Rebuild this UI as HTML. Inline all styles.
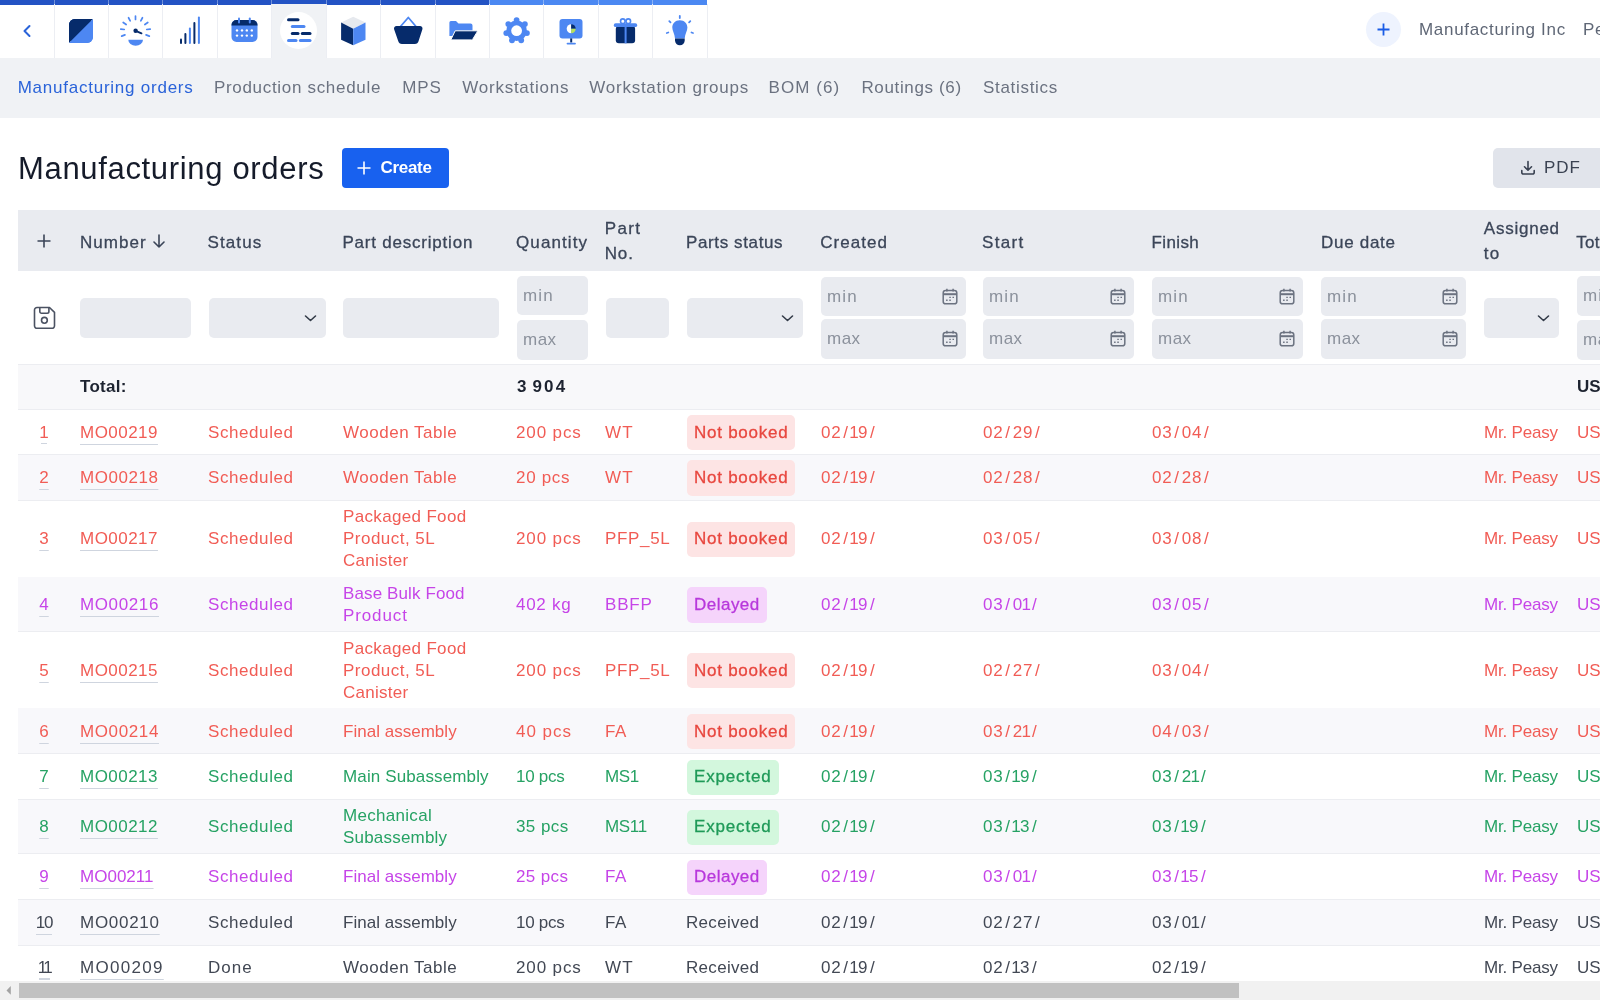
<!DOCTYPE html>
<html><head><meta charset="utf-8"><style>
*{box-sizing:border-box;margin:0;padding:0}
html,body{width:1600px;height:1000px;overflow:hidden;background:#fff;font-family:"Liberation Sans",sans-serif;color:#3a404c}
#top{position:absolute;left:0;top:0;width:1600px;height:58px;background:#fff}
.sep{position:absolute;top:4px;width:1px;height:54px;background:#eceef3}
.ic{position:absolute;top:4px;width:54px;height:54px}
#nav{position:absolute;left:0;top:58px;width:1600px;height:59.5px;background:#f0f2f5}
.nv{position:absolute;top:78px;font-size:17px;line-height:20px;color:#6b7280;white-space:nowrap}
#title{position:absolute;left:18px;top:151px;font-size:31px;line-height:36px;color:#151b2a;white-space:nowrap}
.btn{position:absolute;display:flex;align-items:center;font-size:17px;white-space:nowrap}
#create{left:342px;top:148px;width:107px;height:39.7px;background:#1861ef;border-radius:4px;color:#fff;font-weight:bold}
#pdf{left:1493px;top:148px;width:130px;height:40px;background:#e1e4eb;border-radius:5px;color:#3a4252}
#thead{position:absolute;left:18px;top:210px;width:1600px;height:61px;background:#e9ebf0}
.th{position:absolute;font-size:17px;line-height:24px;color:#3b4558;white-space:nowrap;-webkit-text-stroke:0.3px currentColor}
.inp{position:absolute;background:#e9ebf0;border-radius:5px}
.ph{position:absolute;left:6px;top:0;height:100%;display:flex;align-items:center;font-size:17px;color:#8b919c}
.row{position:absolute;left:18px;width:1600px}
.bl{position:absolute;left:18px;width:1600px;height:1px;background:#ecedf1}
.c{position:absolute;top:0;height:100%;display:flex;align-items:center;font-size:17px;line-height:22px;white-space:nowrap;padding-top:1.5px}
.u{text-decoration:underline;text-decoration-color:#cfd5df;text-decoration-thickness:1.3px;text-underline-offset:5.5px;text-decoration-skip-ink:none}
.badge{padding:0 7px;height:35.5px;border-radius:5px;display:flex;align-items:center;-webkit-text-stroke:0.3px currentColor}
.r{color:#f15c55}.r .badge{background:#fde4e4;color:#e8473f}
.p{color:#c645e8}.p .badge{background:#f5d4fb;color:#b838dc}
.g{color:#26a264}.g .badge{background:#d3f7dd;color:#1f9a58}
.k{color:#424854}
.alt{background:#f8f8fb}
#sb{position:absolute;left:0;top:981px;width:1600px;height:19px;background:#f1f1f1}
#thumb{position:absolute;left:19px;top:983px;width:1220px;height:14.5px;background:#c1c1c1}
</style></head><body><div id="wrap" style="position:absolute;left:0;top:0;width:1600px;height:1000px;overflow:hidden;will-change:transform">
<div id="top"></div>
<div style="position:absolute;left:0;top:0;width:489px;height:4.5px;background:#2353c4"></div>
<div style="position:absolute;left:489px;top:0;width:218px;height:4.5px;background:#4b88f2"></div>
<div style="position:absolute;left:271px;top:4px;width:55px;height:54px;background:#f0f2f5"></div>
<div style="position:absolute;left:280px;top:12px;width:37px;height:37px;border-radius:50%;background:#fff"></div>
<div class="sep" style="left:54px"></div>
<div style="position:absolute;left:54px;top:0;width:1px;height:4px;background:rgba(255,255,255,0.35)"></div>
<div class="sep" style="left:108px"></div>
<div style="position:absolute;left:108px;top:0;width:1px;height:4px;background:rgba(255,255,255,0.35)"></div>
<div class="sep" style="left:162px"></div>
<div style="position:absolute;left:162px;top:0;width:1px;height:4px;background:rgba(255,255,255,0.35)"></div>
<div class="sep" style="left:217px"></div>
<div style="position:absolute;left:217px;top:0;width:1px;height:4px;background:rgba(255,255,255,0.35)"></div>
<div class="sep" style="left:271px"></div>
<div style="position:absolute;left:271px;top:0;width:1px;height:4px;background:rgba(255,255,255,0.35)"></div>
<div class="sep" style="left:326px"></div>
<div style="position:absolute;left:326px;top:0;width:1px;height:4px;background:rgba(255,255,255,0.35)"></div>
<div class="sep" style="left:380px"></div>
<div style="position:absolute;left:380px;top:0;width:1px;height:4px;background:rgba(255,255,255,0.35)"></div>
<div class="sep" style="left:435px"></div>
<div style="position:absolute;left:435px;top:0;width:1px;height:4px;background:rgba(255,255,255,0.35)"></div>
<div class="sep" style="left:489px"></div>
<div style="position:absolute;left:489px;top:0;width:1px;height:4px;background:rgba(255,255,255,0.35)"></div>
<div class="sep" style="left:543px"></div>
<div style="position:absolute;left:543px;top:0;width:1px;height:4px;background:rgba(255,255,255,0.35)"></div>
<div class="sep" style="left:598px"></div>
<div style="position:absolute;left:598px;top:0;width:1px;height:4px;background:rgba(255,255,255,0.35)"></div>
<div class="sep" style="left:652px"></div>
<div style="position:absolute;left:652px;top:0;width:1px;height:4px;background:rgba(255,255,255,0.35)"></div>
<div class="sep" style="left:707px"></div>
<div style="position:absolute;left:707px;top:0;width:1px;height:4px;background:rgba(255,255,255,0.35)"></div>
<svg style="position:absolute;left:17px;top:19px" width="20" height="24" viewBox="0 0 20 24"><path d="M12.5 7 L7.5 12 L12.5 17" fill="none" stroke="#2a63d9" stroke-width="2" stroke-linecap="round" stroke-linejoin="round"/></svg>
<svg style="position:absolute;left:54px;top:4px" width="54" height="54" viewBox="54 4 54 54"><defs><clipPath id="cl1"><rect x="69" y="19" width="24" height="24" rx="6" ry="6"/></clipPath></defs><g clip-path="url(#cl1)"><rect x="69" y="19" width="24" height="24" fill="#4d87f2"/><path d="M69 19 H93 L69 43 Z" fill="#062b6b"/></g><path d="M69 43 V25 a6 6 0 0 1 6 -6 H93 Z" fill="#062b6b"/><path d="M93 19 V37 a6 6 0 0 1 -6 6 H69 Z" fill="#4d87f2"/></svg>
<svg style="position:absolute;left:108px;top:4px" width="54" height="54" viewBox="108 4 54 54"><line x1="135.50" y1="19.50" x2="135.50" y2="16.00" stroke="#4d87f2" stroke-width="1.7" stroke-linecap="round"/><line x1="140.81" y1="20.82" x2="142.45" y2="17.73" stroke="#4d87f2" stroke-width="1.7" stroke-linecap="round"/><line x1="144.87" y1="24.48" x2="147.77" y2="22.52" stroke="#4d87f2" stroke-width="1.7" stroke-linecap="round"/><line x1="146.73" y1="29.52" x2="150.20" y2="29.12" stroke="#4d87f2" stroke-width="1.7" stroke-linecap="round"/><line x1="146.05" y1="34.85" x2="149.32" y2="36.10" stroke="#4d87f2" stroke-width="1.7" stroke-linecap="round"/><line x1="130.19" y1="20.82" x2="128.55" y2="17.73" stroke="#4d87f2" stroke-width="1.7" stroke-linecap="round"/><line x1="126.13" y1="24.48" x2="123.23" y2="22.52" stroke="#4d87f2" stroke-width="1.7" stroke-linecap="round"/><line x1="124.27" y1="29.52" x2="120.80" y2="29.12" stroke="#4d87f2" stroke-width="1.7" stroke-linecap="round"/><line x1="124.95" y1="34.85" x2="121.68" y2="36.10" stroke="#4d87f2" stroke-width="1.7" stroke-linecap="round"/><circle cx="135.6" cy="30.8" r="2.2" fill="#062b6b"/><line x1="135.6" y1="30.8" x2="141.5" y2="33.3" stroke="#062b6b" stroke-width="1.8" stroke-linecap="round"/><path d="M128.3 39.8 H143 A7.35 6 0 0 1 128.3 39.8 Z" fill="#4d87f2"/></svg>
<svg style="position:absolute;left:162px;top:4px" width="54" height="54" viewBox="162 4 54 54"><line x1="181" y1="39.4" x2="181" y2="43" stroke="#062b6b" stroke-width="2" stroke-linecap="round"/><line x1="185.4" y1="33.9" x2="185.4" y2="43" stroke="#062b6b" stroke-width="2" stroke-linecap="round"/><line x1="189.9" y1="28.4" x2="189.9" y2="43" stroke="#4d87f2" stroke-width="2" stroke-linecap="round"/><line x1="194.4" y1="22.9" x2="194.4" y2="43" stroke="#062b6b" stroke-width="2" stroke-linecap="round"/><line x1="198.9" y1="17.4" x2="198.9" y2="43" stroke="#4d87f2" stroke-width="2" stroke-linecap="round"/></svg>
<svg style="position:absolute;left:217px;top:4px" width="54" height="54" viewBox="217 4 54 54"><rect x="231.5" y="20" width="26" height="22" rx="5" fill="#4d87f2"/><path d="M231.5 25.5 V25 a5 5 0 0 1 5 -5 H252.5 a5 5 0 0 1 5 5 V25.5 Z" fill="#062b6b"/><circle cx="237" cy="30.4" r="1.2" fill="#fff"/><circle cx="237" cy="35.6" r="1.2" fill="#fff"/><circle cx="242" cy="30.4" r="1.2" fill="#fff"/><circle cx="242" cy="35.6" r="1.2" fill="#fff"/><circle cx="246.8" cy="30.4" r="1.2" fill="#fff"/><circle cx="246.8" cy="35.6" r="1.2" fill="#fff"/><circle cx="251.8" cy="30.4" r="1.2" fill="#fff"/><circle cx="251.8" cy="35.6" r="1.2" fill="#fff"/><line x1="239" y1="18.5" x2="239" y2="22.5" stroke="#4d87f2" stroke-width="2" stroke-linecap="round"/><line x1="249.8" y1="18.5" x2="249.8" y2="22.5" stroke="#4d87f2" stroke-width="2" stroke-linecap="round"/></svg>
<svg style="position:absolute;left:271px;top:4px" width="54" height="54" viewBox="271 4 54 54"><line x1="288.5" y1="19.8" x2="298" y2="19.8" stroke="#062b6b" stroke-width="3" stroke-linecap="round"/><line x1="292.3" y1="26.6" x2="304" y2="26.6" stroke="#4d87f2" stroke-width="3" stroke-linecap="round"/><line x1="292.3" y1="33.6" x2="298" y2="33.6" stroke="#062b6b" stroke-width="3" stroke-linecap="round"/><line x1="302.3" y1="33.6" x2="310" y2="33.6" stroke="#062b6b" stroke-width="3" stroke-linecap="round"/><line x1="288.5" y1="40.4" x2="296" y2="40.4" stroke="#4d87f2" stroke-width="3" stroke-linecap="round"/><line x1="300.4" y1="40.4" x2="310" y2="40.4" stroke="#4d87f2" stroke-width="3" stroke-linecap="round"/></svg>
<svg style="position:absolute;left:326px;top:4px" width="54" height="54" viewBox="326 4 54 54"><path d="M353.2 16.7 L365.5 22.6 L353.2 28.8 L341.1 22.6Z" fill="#e6e9ee"/><path d="M341.1 22.6 L353.2 28.8 V45.3 L341.1 39.8Z" fill="#062b6b"/><path d="M365.5 22.6 L353.2 28.8 V45.3 L365.5 39.8Z" fill="#4d87f2"/></svg>
<svg style="position:absolute;left:380px;top:4px" width="54" height="54" viewBox="380 4 54 54"><path d="M400.5 26.5 L408.3 17.5 L416 26.5" fill="none" stroke="#4d87f2" stroke-width="1.8" stroke-linejoin="round"/><path d="M396.5 26 H420 a2.5 2.5 0 0 1 2.4 3.2 L418.6 41 a4 4 0 0 1 -3.8 3 H402 a4 4 0 0 1 -3.8 -3 L394.1 29.2 a2.5 2.5 0 0 1 2.4 -3.2Z" fill="#062b6b"/></svg>
<svg style="position:absolute;left:435px;top:4px" width="54" height="54" viewBox="435 4 54 54"><path d="M449.4 22.5 a1.5 1.5 0 0 1 1.5 -1.5 H456 L458.5 23.5 H470.5 a2 2 0 0 1 2 2 V36 H449.4Z" fill="#4d87f2"/><path d="M455.2 30.8 H476.5 a0.8 0.8 0 0 1 0.7 1.1 L472.6 39.4 a1 1 0 0 1 -0.9 0.5 H450.8 Z" fill="#062b6b" stroke="#fff" stroke-width="1"/></svg>
<svg style="position:absolute;left:489px;top:4px" width="54" height="54" viewBox="489 4 54 54"><circle cx="516.6" cy="30.7" r="10.3" fill="#4d87f2"/><circle cx="516.60" cy="20.10" r="2.9" fill="#4d87f2"/><circle cx="524.89" cy="24.09" r="2.9" fill="#4d87f2"/><circle cx="526.93" cy="33.06" r="2.9" fill="#4d87f2"/><circle cx="521.20" cy="40.25" r="2.9" fill="#4d87f2"/><circle cx="512.00" cy="40.25" r="2.9" fill="#4d87f2"/><circle cx="506.27" cy="33.06" r="2.9" fill="#4d87f2"/><circle cx="508.31" cy="24.09" r="2.9" fill="#4d87f2"/><circle cx="516.6" cy="30.7" r="5.4" fill="#fff"/></svg>
<svg style="position:absolute;left:543px;top:4px" width="54" height="54" viewBox="543 4 54 54"><rect x="559.5" y="19.1" width="23" height="19.3" rx="3" fill="#4d87f2"/><path d="M571.2 24.3 A4.5 4.5 0 0 0 571.2 33.3Z" fill="#fff"/><path d="M571.2 24.3 A4.5 4.5 0 0 1 575.7 28.8 H571.2Z" fill="#062b6b"/><path d="M575.7 28.8 A4.5 4.5 0 0 1 571.2 33.3 V28.8Z" fill="#b9e05a"/><line x1="571.2" y1="38.4" x2="571.2" y2="42.5" stroke="#062b6b" stroke-width="2"/><line x1="567.5" y1="43.6" x2="575" y2="43.6" stroke="#4d87f2" stroke-width="1.8" stroke-linecap="round"/></svg>
<svg style="position:absolute;left:598px;top:4px" width="54" height="54" viewBox="598 4 54 54"><rect x="615.8" y="26" width="19.3" height="17.3" rx="3" fill="#062b6b"/><rect x="624.6" y="26" width="2" height="17.3" fill="#4d87f2"/><rect x="613.8" y="23.2" width="23.4" height="3.9" rx="1.9" fill="#4d87f2"/><circle cx="622.8" cy="21.2" r="2.3" fill="none" stroke="#4d87f2" stroke-width="1.6"/><circle cx="628.3" cy="21.2" r="2.3" fill="none" stroke="#4d87f2" stroke-width="1.6"/></svg>
<svg style="position:absolute;left:652px;top:4px" width="54" height="54" viewBox="652 4 54 54"><path d="M679.8 20.3 C684.5 20.3 687.4 23.8 687.4 27.6 C687.4 31 685 34 684.7 38.5 H675 C674.7 34 672.3 31 672.3 27.6 C672.3 23.8 675.2 20.3 679.8 20.3Z" fill="#4d87f2"/><path d="M675 38.5 H684.7 V40.5 a4.85 4.85 0 0 1 -9.7 0Z" fill="#062b6b"/><line x1="679.8" y1="16" x2="679.8" y2="18" stroke="#4d87f2" stroke-width="1.8" stroke-linecap="round"/><line x1="669.3" y1="21.2" x2="670.5" y2="22.3" stroke="#4d87f2" stroke-width="1.8" stroke-linecap="round"/><line x1="690.3" y1="21.2" x2="689.1" y2="22.3" stroke="#4d87f2" stroke-width="1.8" stroke-linecap="round"/><line x1="666.8" y1="33" x2="668.3" y2="32.5" stroke="#4d87f2" stroke-width="1.8" stroke-linecap="round"/><line x1="693" y1="33" x2="691.5" y2="32.5" stroke="#4d87f2" stroke-width="1.8" stroke-linecap="round"/></svg>
<div style="position:absolute;left:1366px;top:12px;width:35px;height:35px;border-radius:50%;background:#eef3fe"></div>
<svg style="position:absolute;left:1376px;top:22px" width="15" height="15" viewBox="0 0 15 15"><path d="M7.5 1.5 V13.5 M1.5 7.5 H13.5" stroke="#1a5ce6" stroke-width="1.8"/></svg>
<div class="nv" style="left:1419px;top:20px;color:#5f6776;letter-spacing:0.69px;">Manufacturing Inc</div>
<div class="nv" style="left:1583px;top:20px;color:#5f6776;letter-spacing:0.6px">Peasy</div>
<div id="nav"></div>
<div class="nv" style="left:17.7px;letter-spacing:0.76px;color:#2a63d9">Manufacturing orders</div>
<div class="nv" style="left:213.9px;letter-spacing:0.69px;">Production schedule</div>
<div class="nv" style="left:402.3px;letter-spacing:0.80px;">MPS</div>
<div class="nv" style="left:462.3px;letter-spacing:0.75px;">Workstations</div>
<div class="nv" style="left:589.3px;letter-spacing:0.75px;">Workstation groups</div>
<div class="nv" style="left:768.6px;letter-spacing:1.07px;">BOM (6)</div>
<div class="nv" style="left:861.4px;letter-spacing:0.65px;">Routings (6)</div>
<div class="nv" style="left:983.0px;letter-spacing:0.69px;">Statistics</div>
<div id="title" style="letter-spacing:0.67px;">Manufacturing orders</div>
<div class="btn" id="create"><svg style="position:absolute;left:15px;top:13px" width="14" height="14" viewBox="0 0 14 14"><path d="M7 0.5 V13.5 M0.5 7 H13.5" stroke="#fff" stroke-width="1.6"/></svg><span style="position:absolute;left:38.5px;top:10px;line-height:20px;letter-spacing:-0.30px;">Create</span></div>
<div class="btn" id="pdf"><svg style="position:absolute;left:27px;top:12px" width="16" height="16" viewBox="0 0 16 16"><path d="M8 1.5 V10 M4.5 6.8 L8 10.2 L11.5 6.8 M1.8 10.5 V12.5 a1.5 1.5 0 0 0 1.5 1.5 H12.7 a1.5 1.5 0 0 0 1.5 -1.5 V10.5" fill="none" stroke="#3a4252" stroke-width="1.6" stroke-linecap="round" stroke-linejoin="round"/></svg><span style="position:absolute;left:51px;top:10px;line-height:20px;letter-spacing:0.95px;">PDF</span></div>
<div id="thead"></div>
<svg style="position:absolute;left:37px;top:234px" width="14" height="14" viewBox="0 0 14 14"><path d="M7 0.5 V13.5 M0.5 7 H13.5" stroke="#3b4558" stroke-width="1.6"/></svg>
<div class="th" style="left:79.9px;top:230.5px;letter-spacing:1.04px;">Number</div>
<div class="th" style="left:207.5px;top:230.5px;letter-spacing:1.10px;">Status</div>
<div class="th" style="left:342.4px;top:230.5px;letter-spacing:0.79px;">Part description</div>
<div class="th" style="left:516.0px;top:230.5px;letter-spacing:1.11px;">Quantity</div>
<div class="th" style="left:604.8px;top:217px;letter-spacing:1.30px;">Part</div>
<div class="th" style="left:604.8px;top:241.5px;letter-spacing:0.80px;">No.</div>
<div class="th" style="left:686.0px;top:230.5px;letter-spacing:0.62px;">Parts status</div>
<div class="th" style="left:820.2px;top:230.5px;letter-spacing:1.03px;">Created</div>
<div class="th" style="left:982.0px;top:230.5px;letter-spacing:1.30px;">Start</div>
<div class="th" style="left:1151.5px;top:230.5px;letter-spacing:0.39px;">Finish</div>
<div class="th" style="left:1321.1px;top:230.5px;letter-spacing:0.69px;">Due date</div>
<div class="th" style="left:1483.8px;top:217px;letter-spacing:0.76px;">Assigned</div>
<div class="th" style="left:1483.8px;top:241.5px;letter-spacing:1.30px;">to</div>
<div class="th" style="left:1576.3px;top:230.5px;letter-spacing:0.30px;">Total</div>
<svg style="position:absolute;left:153px;top:234px" width="12" height="14" viewBox="0 0 12 14"><path d="M6 1 V13 M1 8 L6 13 L11 8" fill="none" stroke="#3b4558" stroke-width="1.6" stroke-linecap="round" stroke-linejoin="round"/></svg>
<svg style="position:absolute;left:33px;top:306px" width="23" height="24" viewBox="0 0 23 24"><path d="M4 1.5 H16.5 L21.5 6.3 V19.8 a2.5 2.5 0 0 1 -2.5 2.5 H4 a2.5 2.5 0 0 1 -2.5 -2.5 V4 a2.5 2.5 0 0 1 2.5 -2.5Z" fill="none" stroke="#4b5262" stroke-width="1.6" stroke-linejoin="round"/><path d="M6.8 1.8 V5.5 a1.7 1.7 0 0 0 1.7 1.7 H14.2 a1.7 1.7 0 0 0 1.7 -1.7 V1.8" fill="none" stroke="#4b5262" stroke-width="1.6"/><circle cx="11.4" cy="14.3" r="2.9" fill="none" stroke="#4b5262" stroke-width="1.6"/></svg>
<div class="inp" style="left:80px;top:298px;width:111px;height:40px"></div>
<div class="inp" style="left:209px;top:298px;width:117px;height:40px"><svg style="position:absolute;right:9px;top:15.0px" width="13" height="10" viewBox="0 0 13 10"><path d="M1.5 3 L6.5 7.5 L11.5 3" fill="none" stroke="#333b48" stroke-width="1.6" stroke-linecap="round" stroke-linejoin="round"/></svg></div>
<div class="inp" style="left:343px;top:298px;width:156px;height:40px"></div>
<div class="inp" style="left:517px;top:276px;width:71px;height:39px"><div class="ph" style="letter-spacing:1.15px;">min</div></div>
<div class="inp" style="left:517px;top:320px;width:71px;height:39.5px"><div class="ph" style="letter-spacing:0.50px;">max</div></div>
<div class="inp" style="left:605.5px;top:298px;width:63.5px;height:39.5px"></div>
<div class="inp" style="left:687px;top:298px;width:116px;height:39.5px"><svg style="position:absolute;right:9px;top:14.8px" width="13" height="10" viewBox="0 0 13 10"><path d="M1.5 3 L6.5 7.5 L11.5 3" fill="none" stroke="#333b48" stroke-width="1.6" stroke-linecap="round" stroke-linejoin="round"/></svg></div>
<div class="inp" style="left:821px;top:277px;width:144.5px;height:39px"><div class="ph" style="letter-spacing:1.15px;">min</div><svg style="position:absolute;right:8px;top:10.5px" width="16" height="17" viewBox="0 0 16 17"><rect x="1.2" y="2.6" width="13.6" height="13.2" rx="2.4" fill="none" stroke="#6b7280" stroke-width="1.5"/><path d="M1.2 6.2 H14.8" stroke="#6b7280" stroke-width="2"/><path d="M4.9 0.8 V3.6 M11.1 0.8 V3.6" stroke="#6b7280" stroke-width="1.5"/><path d="M7.3 9.4h1.5M10.5 9.4h1.5M4.1 12.2h1.5M7.3 12.2h1.5" stroke="#6b7280" stroke-width="1.4"/></svg></div>
<div class="inp" style="left:821px;top:319px;width:144.5px;height:39.5px"><div class="ph" style="letter-spacing:0.50px;">max</div><svg style="position:absolute;right:8px;top:10.8px" width="16" height="17" viewBox="0 0 16 17"><rect x="1.2" y="2.6" width="13.6" height="13.2" rx="2.4" fill="none" stroke="#6b7280" stroke-width="1.5"/><path d="M1.2 6.2 H14.8" stroke="#6b7280" stroke-width="2"/><path d="M4.9 0.8 V3.6 M11.1 0.8 V3.6" stroke="#6b7280" stroke-width="1.5"/><path d="M7.3 9.4h1.5M10.5 9.4h1.5M4.1 12.2h1.5M7.3 12.2h1.5" stroke="#6b7280" stroke-width="1.4"/></svg></div>
<div class="inp" style="left:983px;top:277px;width:151px;height:39px"><div class="ph" style="letter-spacing:1.15px;">min</div><svg style="position:absolute;right:8px;top:10.5px" width="16" height="17" viewBox="0 0 16 17"><rect x="1.2" y="2.6" width="13.6" height="13.2" rx="2.4" fill="none" stroke="#6b7280" stroke-width="1.5"/><path d="M1.2 6.2 H14.8" stroke="#6b7280" stroke-width="2"/><path d="M4.9 0.8 V3.6 M11.1 0.8 V3.6" stroke="#6b7280" stroke-width="1.5"/><path d="M7.3 9.4h1.5M10.5 9.4h1.5M4.1 12.2h1.5M7.3 12.2h1.5" stroke="#6b7280" stroke-width="1.4"/></svg></div>
<div class="inp" style="left:983px;top:319px;width:151px;height:39.5px"><div class="ph" style="letter-spacing:0.50px;">max</div><svg style="position:absolute;right:8px;top:10.8px" width="16" height="17" viewBox="0 0 16 17"><rect x="1.2" y="2.6" width="13.6" height="13.2" rx="2.4" fill="none" stroke="#6b7280" stroke-width="1.5"/><path d="M1.2 6.2 H14.8" stroke="#6b7280" stroke-width="2"/><path d="M4.9 0.8 V3.6 M11.1 0.8 V3.6" stroke="#6b7280" stroke-width="1.5"/><path d="M7.3 9.4h1.5M10.5 9.4h1.5M4.1 12.2h1.5M7.3 12.2h1.5" stroke="#6b7280" stroke-width="1.4"/></svg></div>
<div class="inp" style="left:1152px;top:277px;width:151px;height:39px"><div class="ph" style="letter-spacing:1.15px;">min</div><svg style="position:absolute;right:8px;top:10.5px" width="16" height="17" viewBox="0 0 16 17"><rect x="1.2" y="2.6" width="13.6" height="13.2" rx="2.4" fill="none" stroke="#6b7280" stroke-width="1.5"/><path d="M1.2 6.2 H14.8" stroke="#6b7280" stroke-width="2"/><path d="M4.9 0.8 V3.6 M11.1 0.8 V3.6" stroke="#6b7280" stroke-width="1.5"/><path d="M7.3 9.4h1.5M10.5 9.4h1.5M4.1 12.2h1.5M7.3 12.2h1.5" stroke="#6b7280" stroke-width="1.4"/></svg></div>
<div class="inp" style="left:1152px;top:319px;width:151px;height:39.5px"><div class="ph" style="letter-spacing:0.50px;">max</div><svg style="position:absolute;right:8px;top:10.8px" width="16" height="17" viewBox="0 0 16 17"><rect x="1.2" y="2.6" width="13.6" height="13.2" rx="2.4" fill="none" stroke="#6b7280" stroke-width="1.5"/><path d="M1.2 6.2 H14.8" stroke="#6b7280" stroke-width="2"/><path d="M4.9 0.8 V3.6 M11.1 0.8 V3.6" stroke="#6b7280" stroke-width="1.5"/><path d="M7.3 9.4h1.5M10.5 9.4h1.5M4.1 12.2h1.5M7.3 12.2h1.5" stroke="#6b7280" stroke-width="1.4"/></svg></div>
<div class="inp" style="left:1321px;top:277px;width:144.5px;height:39px"><div class="ph" style="letter-spacing:1.15px;">min</div><svg style="position:absolute;right:8px;top:10.5px" width="16" height="17" viewBox="0 0 16 17"><rect x="1.2" y="2.6" width="13.6" height="13.2" rx="2.4" fill="none" stroke="#6b7280" stroke-width="1.5"/><path d="M1.2 6.2 H14.8" stroke="#6b7280" stroke-width="2"/><path d="M4.9 0.8 V3.6 M11.1 0.8 V3.6" stroke="#6b7280" stroke-width="1.5"/><path d="M7.3 9.4h1.5M10.5 9.4h1.5M4.1 12.2h1.5M7.3 12.2h1.5" stroke="#6b7280" stroke-width="1.4"/></svg></div>
<div class="inp" style="left:1321px;top:319px;width:144.5px;height:39.5px"><div class="ph" style="letter-spacing:0.50px;">max</div><svg style="position:absolute;right:8px;top:10.8px" width="16" height="17" viewBox="0 0 16 17"><rect x="1.2" y="2.6" width="13.6" height="13.2" rx="2.4" fill="none" stroke="#6b7280" stroke-width="1.5"/><path d="M1.2 6.2 H14.8" stroke="#6b7280" stroke-width="2"/><path d="M4.9 0.8 V3.6 M11.1 0.8 V3.6" stroke="#6b7280" stroke-width="1.5"/><path d="M7.3 9.4h1.5M10.5 9.4h1.5M4.1 12.2h1.5M7.3 12.2h1.5" stroke="#6b7280" stroke-width="1.4"/></svg></div>
<div class="inp" style="left:1484px;top:298px;width:75px;height:39.5px"><svg style="position:absolute;right:9px;top:14.8px" width="13" height="10" viewBox="0 0 13 10"><path d="M1.5 3 L6.5 7.5 L11.5 3" fill="none" stroke="#333b48" stroke-width="1.6" stroke-linecap="round" stroke-linejoin="round"/></svg></div>
<div class="inp" style="left:1577px;top:276px;width:40px;height:40px"><div class="ph" style="letter-spacing:1.15px;">min</div></div>
<div class="inp" style="left:1577px;top:320px;width:40px;height:40px"><div class="ph" style="letter-spacing:0.50px;">max</div></div>
<div class="bl" style="top:364px"></div>
<div class="row" style="top:365px;height:44px;background:#f8f8fa"></div>
<div class="c" style="left:80px;top:365px;height:44px;padding-top:0;font-weight:bold;color:#1d2330;letter-spacing:0.30px;">Total:</div>
<div class="c" style="left:517px;top:365px;height:44px;padding-top:0;font-weight:bold;color:#1d2330"><span>3</span><span style="margin-left:6px;letter-spacing:2.2px">904</span></div>
<div class="c" style="left:1577px;top:365px;height:44px;padding-top:0;font-weight:bold;color:#1d2330">USD</div>
<div class="bl" style="top:409px"></div>
<div class="row" style="top:409px;height:45.5px"></div>
<div class="bl" style="top:454.0px"></div>
<div class="c r" style="left:35px;top:409px;height:45.5px;width:18px;justify-content:center"><span style="position:relative;display:inline-block;line-height:22px;">1<span style="position:absolute;left:50%;margin-left:-2.6px;width:5.2px;top:21.6px;height:1.3px;background:#cfd5df"></span></span></div>
<div class="c r" style="left:80px;top:409px;height:45.5px;"><span class="u"><span style="letter-spacing:0.47px;">MO00219</span></span></div>
<div class="c r" style="left:208px;top:409px;height:45.5px;"><span style="letter-spacing:0.58px;">Scheduled</span></div>
<div class="c r" style="left:343px;top:409px;height:45.5px;"><div><span style="letter-spacing:0.52px;">Wooden Table</span></div></div>
<div class="c r" style="left:516px;top:409px;height:45.5px;"><span style="letter-spacing:0.87px;">200 pcs</span></div>
<div class="c r" style="left:605px;top:409px;height:45.5px;"><span style="letter-spacing:1.30px;">WT</span></div>
<div class="c r" style="left:687px;top:409px;height:45.5px;"><span class="badge"><span style="letter-spacing:0.74px;">Not booked</span></span></div>
<div class="c r" style="left:821px;top:409px;height:45.5px;"><span style="letter-spacing:0.7px">02<span style="margin:0 2px">/</span><span style="margin:0 -1.5px">1</span>9<span style="margin:0 2px">/</span></span></div>
<div class="c r" style="left:983px;top:409px;height:45.5px;"><span style="letter-spacing:0.7px">02<span style="margin:0 2px">/</span>29<span style="margin:0 2px">/</span></span></div>
<div class="c r" style="left:1152px;top:409px;height:45.5px;"><span style="letter-spacing:0.7px">03<span style="margin:0 2px">/</span>04<span style="margin:0 2px">/</span></span></div>
<div class="c r" style="left:1484px;top:409px;height:45.5px;"><span style="letter-spacing:-0.19px;">Mr. Peasy</span></div>
<div class="c r" style="left:1577px;top:409px;height:45.5px;">USD</div>
<div class="row alt" style="top:454.5px;height:45.8px"></div>
<div class="bl" style="top:499.8px"></div>
<div class="c r" style="left:35px;top:454.5px;height:45.8px;width:18px;justify-content:center"><span class="u">2</span></div>
<div class="c r" style="left:80px;top:454.5px;height:45.8px;"><span class="u"><span style="letter-spacing:0.53px;">MO00218</span></span></div>
<div class="c r" style="left:208px;top:454.5px;height:45.8px;"><span style="letter-spacing:0.58px;">Scheduled</span></div>
<div class="c r" style="left:343px;top:454.5px;height:45.8px;"><div><span style="letter-spacing:0.52px;">Wooden Table</span></div></div>
<div class="c r" style="left:516px;top:454.5px;height:45.8px;"><span style="letter-spacing:0.68px;">20 pcs</span></div>
<div class="c r" style="left:605px;top:454.5px;height:45.8px;"><span style="letter-spacing:1.30px;">WT</span></div>
<div class="c r" style="left:687px;top:454.5px;height:45.8px;"><span class="badge"><span style="letter-spacing:0.74px;">Not booked</span></span></div>
<div class="c r" style="left:821px;top:454.5px;height:45.8px;"><span style="letter-spacing:0.7px">02<span style="margin:0 2px">/</span><span style="margin:0 -1.5px">1</span>9<span style="margin:0 2px">/</span></span></div>
<div class="c r" style="left:983px;top:454.5px;height:45.8px;"><span style="letter-spacing:0.7px">02<span style="margin:0 2px">/</span>28<span style="margin:0 2px">/</span></span></div>
<div class="c r" style="left:1152px;top:454.5px;height:45.8px;"><span style="letter-spacing:0.7px">02<span style="margin:0 2px">/</span>28<span style="margin:0 2px">/</span></span></div>
<div class="c r" style="left:1484px;top:454.5px;height:45.8px;"><span style="letter-spacing:-0.19px;">Mr. Peasy</span></div>
<div class="c r" style="left:1577px;top:454.5px;height:45.8px;">USD</div>
<div class="row" style="top:500.3px;height:76.7px"></div>
<div class="bl" style="top:576.5px"></div>
<div class="c r" style="left:35px;top:500.3px;height:76.7px;width:18px;justify-content:center"><span class="u">3</span></div>
<div class="c r" style="left:80px;top:500.3px;height:76.7px;"><span class="u"><span style="letter-spacing:0.47px;">MO00217</span></span></div>
<div class="c r" style="left:208px;top:500.3px;height:76.7px;"><span style="letter-spacing:0.58px;">Scheduled</span></div>
<div class="c r" style="left:343px;top:500.3px;height:76.7px;"><div><span style="letter-spacing:0.34px;">Packaged Food</span><br><span style="letter-spacing:0.48px;">Product, 5L</span><br><span style="letter-spacing:0.27px;">Canister</span></div></div>
<div class="c r" style="left:516px;top:500.3px;height:76.7px;"><span style="letter-spacing:0.87px;">200 pcs</span></div>
<div class="c r" style="left:605px;top:500.3px;height:76.7px;"><span style="letter-spacing:0.66px;">PFP_5L</span></div>
<div class="c r" style="left:687px;top:500.3px;height:76.7px;"><span class="badge"><span style="letter-spacing:0.74px;">Not booked</span></span></div>
<div class="c r" style="left:821px;top:500.3px;height:76.7px;"><span style="letter-spacing:0.7px">02<span style="margin:0 2px">/</span><span style="margin:0 -1.5px">1</span>9<span style="margin:0 2px">/</span></span></div>
<div class="c r" style="left:983px;top:500.3px;height:76.7px;"><span style="letter-spacing:0.7px">03<span style="margin:0 2px">/</span>05<span style="margin:0 2px">/</span></span></div>
<div class="c r" style="left:1152px;top:500.3px;height:76.7px;"><span style="letter-spacing:0.7px">03<span style="margin:0 2px">/</span>08<span style="margin:0 2px">/</span></span></div>
<div class="c r" style="left:1484px;top:500.3px;height:76.7px;"><span style="letter-spacing:-0.19px;">Mr. Peasy</span></div>
<div class="c r" style="left:1577px;top:500.3px;height:76.7px;">USD</div>
<div class="row alt" style="top:577px;height:54.6px"></div>
<div class="bl" style="top:631.1px"></div>
<div class="c p" style="left:35px;top:577px;height:54.6px;width:18px;justify-content:center"><span class="u">4</span></div>
<div class="c p" style="left:80px;top:577px;height:54.6px;"><span class="u"><span style="letter-spacing:0.62px;">MO00216</span></span></div>
<div class="c p" style="left:208px;top:577px;height:54.6px;"><span style="letter-spacing:0.58px;">Scheduled</span></div>
<div class="c p" style="left:343px;top:577px;height:54.6px;"><div><span style="letter-spacing:0.12px;">Base Bulk Food</span><br><span style="letter-spacing:0.88px;">Product</span></div></div>
<div class="c p" style="left:516px;top:577px;height:54.6px;"><span style="letter-spacing:0.72px;">402 kg</span></div>
<div class="c p" style="left:605px;top:577px;height:54.6px;"><span style="letter-spacing:0.83px;">BBFP</span></div>
<div class="c p" style="left:687px;top:577px;height:54.6px;"><span class="badge"><span style="letter-spacing:0.48px;">Delayed</span></span></div>
<div class="c p" style="left:821px;top:577px;height:54.6px;"><span style="letter-spacing:0.7px">02<span style="margin:0 2px">/</span><span style="margin:0 -1.5px">1</span>9<span style="margin:0 2px">/</span></span></div>
<div class="c p" style="left:983px;top:577px;height:54.6px;"><span style="letter-spacing:0.7px">03<span style="margin:0 2px">/</span>0<span style="margin:0 -1.5px">1</span><span style="margin:0 2px">/</span></span></div>
<div class="c p" style="left:1152px;top:577px;height:54.6px;"><span style="letter-spacing:0.7px">03<span style="margin:0 2px">/</span>05<span style="margin:0 2px">/</span></span></div>
<div class="c p" style="left:1484px;top:577px;height:54.6px;"><span style="letter-spacing:-0.19px;">Mr. Peasy</span></div>
<div class="c p" style="left:1577px;top:577px;height:54.6px;">USD</div>
<div class="row" style="top:631.6px;height:76.6px"></div>
<div class="bl" style="top:707.7px"></div>
<div class="c r" style="left:35px;top:631.6px;height:76.6px;width:18px;justify-content:center"><span class="u">5</span></div>
<div class="c r" style="left:80px;top:631.6px;height:76.6px;"><span class="u"><span style="letter-spacing:0.47px;">MO00215</span></span></div>
<div class="c r" style="left:208px;top:631.6px;height:76.6px;"><span style="letter-spacing:0.58px;">Scheduled</span></div>
<div class="c r" style="left:343px;top:631.6px;height:76.6px;"><div><span style="letter-spacing:0.34px;">Packaged Food</span><br><span style="letter-spacing:0.48px;">Product, 5L</span><br><span style="letter-spacing:0.27px;">Canister</span></div></div>
<div class="c r" style="left:516px;top:631.6px;height:76.6px;"><span style="letter-spacing:0.87px;">200 pcs</span></div>
<div class="c r" style="left:605px;top:631.6px;height:76.6px;"><span style="letter-spacing:0.66px;">PFP_5L</span></div>
<div class="c r" style="left:687px;top:631.6px;height:76.6px;"><span class="badge"><span style="letter-spacing:0.74px;">Not booked</span></span></div>
<div class="c r" style="left:821px;top:631.6px;height:76.6px;"><span style="letter-spacing:0.7px">02<span style="margin:0 2px">/</span><span style="margin:0 -1.5px">1</span>9<span style="margin:0 2px">/</span></span></div>
<div class="c r" style="left:983px;top:631.6px;height:76.6px;"><span style="letter-spacing:0.7px">02<span style="margin:0 2px">/</span>27<span style="margin:0 2px">/</span></span></div>
<div class="c r" style="left:1152px;top:631.6px;height:76.6px;"><span style="letter-spacing:0.7px">03<span style="margin:0 2px">/</span>04<span style="margin:0 2px">/</span></span></div>
<div class="c r" style="left:1484px;top:631.6px;height:76.6px;"><span style="letter-spacing:-0.19px;">Mr. Peasy</span></div>
<div class="c r" style="left:1577px;top:631.6px;height:76.6px;">USD</div>
<div class="row alt" style="top:708.2px;height:45.6px"></div>
<div class="bl" style="top:753.3px"></div>
<div class="c r" style="left:35px;top:708.2px;height:45.6px;width:18px;justify-content:center"><span class="u">6</span></div>
<div class="c r" style="left:80px;top:708.2px;height:45.6px;"><span class="u"><span style="letter-spacing:0.62px;">MO00214</span></span></div>
<div class="c r" style="left:208px;top:708.2px;height:45.6px;"><span style="letter-spacing:0.58px;">Scheduled</span></div>
<div class="c r" style="left:343px;top:708.2px;height:45.6px;"><div><span style="letter-spacing:0.02px;">Final assembly</span></div></div>
<div class="c r" style="left:516px;top:708.2px;height:45.6px;"><span style="letter-spacing:0.99px;">40 pcs</span></div>
<div class="c r" style="left:605px;top:708.2px;height:45.6px;"><span style="letter-spacing:0.50px;">FA</span></div>
<div class="c r" style="left:687px;top:708.2px;height:45.6px;"><span class="badge"><span style="letter-spacing:0.74px;">Not booked</span></span></div>
<div class="c r" style="left:821px;top:708.2px;height:45.6px;"><span style="letter-spacing:0.7px">02<span style="margin:0 2px">/</span><span style="margin:0 -1.5px">1</span>9<span style="margin:0 2px">/</span></span></div>
<div class="c r" style="left:983px;top:708.2px;height:45.6px;"><span style="letter-spacing:0.7px">03<span style="margin:0 2px">/</span>2<span style="margin:0 -1.5px">1</span><span style="margin:0 2px">/</span></span></div>
<div class="c r" style="left:1152px;top:708.2px;height:45.6px;"><span style="letter-spacing:0.7px">04<span style="margin:0 2px">/</span>03<span style="margin:0 2px">/</span></span></div>
<div class="c r" style="left:1484px;top:708.2px;height:45.6px;"><span style="letter-spacing:-0.19px;">Mr. Peasy</span></div>
<div class="c r" style="left:1577px;top:708.2px;height:45.6px;">USD</div>
<div class="row" style="top:753.8px;height:45.7px"></div>
<div class="bl" style="top:799.0px"></div>
<div class="c g" style="left:35px;top:753.8px;height:45.7px;width:18px;justify-content:center"><span class="u">7</span></div>
<div class="c g" style="left:80px;top:753.8px;height:45.7px;"><span class="u"><span style="letter-spacing:0.47px;">MO00213</span></span></div>
<div class="c g" style="left:208px;top:753.8px;height:45.7px;"><span style="letter-spacing:0.58px;">Scheduled</span></div>
<div class="c g" style="left:343px;top:753.8px;height:45.7px;"><div><span style="letter-spacing:0.13px;">Main Subassembly</span></div></div>
<div class="c g" style="left:516px;top:753.8px;height:45.7px;"><span style="letter-spacing:-0.26px;">10 pcs</span></div>
<div class="c g" style="left:605px;top:753.8px;height:45.7px;"><span style="letter-spacing:-0.35px;">MS1</span></div>
<div class="c g" style="left:687px;top:753.8px;height:45.7px;"><span class="badge"><span style="letter-spacing:0.83px;">Expected</span></span></div>
<div class="c g" style="left:821px;top:753.8px;height:45.7px;"><span style="letter-spacing:0.7px">02<span style="margin:0 2px">/</span><span style="margin:0 -1.5px">1</span>9<span style="margin:0 2px">/</span></span></div>
<div class="c g" style="left:983px;top:753.8px;height:45.7px;"><span style="letter-spacing:0.7px">03<span style="margin:0 2px">/</span><span style="margin:0 -1.5px">1</span>9<span style="margin:0 2px">/</span></span></div>
<div class="c g" style="left:1152px;top:753.8px;height:45.7px;"><span style="letter-spacing:0.7px">03<span style="margin:0 2px">/</span>2<span style="margin:0 -1.5px">1</span><span style="margin:0 2px">/</span></span></div>
<div class="c g" style="left:1484px;top:753.8px;height:45.7px;"><span style="letter-spacing:-0.19px;">Mr. Peasy</span></div>
<div class="c g" style="left:1577px;top:753.8px;height:45.7px;">USD</div>
<div class="row alt" style="top:799.5px;height:54.3px"></div>
<div class="bl" style="top:853.3px"></div>
<div class="c g" style="left:35px;top:799.5px;height:54.3px;width:18px;justify-content:center"><span class="u">8</span></div>
<div class="c g" style="left:80px;top:799.5px;height:54.3px;"><span class="u"><span style="letter-spacing:0.47px;">MO00212</span></span></div>
<div class="c g" style="left:208px;top:799.5px;height:54.3px;"><span style="letter-spacing:0.58px;">Scheduled</span></div>
<div class="c g" style="left:343px;top:799.5px;height:54.3px;"><div><span style="letter-spacing:0.30px;">Mechanical</span><br><span style="letter-spacing:0.20px;">Subassembly</span></div></div>
<div class="c g" style="left:516px;top:799.5px;height:54.3px;"><span style="letter-spacing:0.42px;">35 pcs</span></div>
<div class="c g" style="left:605px;top:799.5px;height:54.3px;"><span style="letter-spacing:-0.35px;">MS11</span></div>
<div class="c g" style="left:687px;top:799.5px;height:54.3px;"><span class="badge"><span style="letter-spacing:0.83px;">Expected</span></span></div>
<div class="c g" style="left:821px;top:799.5px;height:54.3px;"><span style="letter-spacing:0.7px">02<span style="margin:0 2px">/</span><span style="margin:0 -1.5px">1</span>9<span style="margin:0 2px">/</span></span></div>
<div class="c g" style="left:983px;top:799.5px;height:54.3px;"><span style="letter-spacing:0.7px">03<span style="margin:0 2px">/</span><span style="margin:0 -1.5px">1</span>3<span style="margin:0 2px">/</span></span></div>
<div class="c g" style="left:1152px;top:799.5px;height:54.3px;"><span style="letter-spacing:0.7px">03<span style="margin:0 2px">/</span><span style="margin:0 -1.5px">1</span>9<span style="margin:0 2px">/</span></span></div>
<div class="c g" style="left:1484px;top:799.5px;height:54.3px;"><span style="letter-spacing:-0.19px;">Mr. Peasy</span></div>
<div class="c g" style="left:1577px;top:799.5px;height:54.3px;">USD</div>
<div class="row" style="top:853.8px;height:45.7px"></div>
<div class="bl" style="top:899.0px"></div>
<div class="c p" style="left:35px;top:853.8px;height:45.7px;width:18px;justify-content:center"><span class="u">9</span></div>
<div class="c p" style="left:80px;top:853.8px;height:45.7px;"><span class="u"><span style="letter-spacing:0.02px;">MO00211</span></span></div>
<div class="c p" style="left:208px;top:853.8px;height:45.7px;"><span style="letter-spacing:0.58px;">Scheduled</span></div>
<div class="c p" style="left:343px;top:853.8px;height:45.7px;"><div><span style="letter-spacing:0.02px;">Final assembly</span></div></div>
<div class="c p" style="left:516px;top:853.8px;height:45.7px;"><span style="letter-spacing:0.36px;">25 pcs</span></div>
<div class="c p" style="left:605px;top:853.8px;height:45.7px;"><span style="letter-spacing:0.50px;">FA</span></div>
<div class="c p" style="left:687px;top:853.8px;height:45.7px;"><span class="badge"><span style="letter-spacing:0.48px;">Delayed</span></span></div>
<div class="c p" style="left:821px;top:853.8px;height:45.7px;"><span style="letter-spacing:0.7px">02<span style="margin:0 2px">/</span><span style="margin:0 -1.5px">1</span>9<span style="margin:0 2px">/</span></span></div>
<div class="c p" style="left:983px;top:853.8px;height:45.7px;"><span style="letter-spacing:0.7px">03<span style="margin:0 2px">/</span>0<span style="margin:0 -1.5px">1</span><span style="margin:0 2px">/</span></span></div>
<div class="c p" style="left:1152px;top:853.8px;height:45.7px;"><span style="letter-spacing:0.7px">03<span style="margin:0 2px">/</span><span style="margin:0 -1.5px">1</span>5<span style="margin:0 2px">/</span></span></div>
<div class="c p" style="left:1484px;top:853.8px;height:45.7px;"><span style="letter-spacing:-0.19px;">Mr. Peasy</span></div>
<div class="c p" style="left:1577px;top:853.8px;height:45.7px;">USD</div>
<div class="row alt" style="top:899.5px;height:45.5px"></div>
<div class="bl" style="top:944.5px"></div>
<div class="c k" style="left:35px;top:899.5px;height:45.5px;width:18px;justify-content:center"><span style="position:relative;display:inline-block;line-height:22px;letter-spacing:-1.2px;">10<span style="position:absolute;left:50%;margin-left:-8.2px;width:16.3px;top:21.6px;height:1.3px;background:#cfd5df"></span></span></div>
<div class="c k" style="left:80px;top:899.5px;height:45.5px;"><span class="u"><span style="letter-spacing:0.72px;">MO00210</span></span></div>
<div class="c k" style="left:208px;top:899.5px;height:45.5px;"><span style="letter-spacing:0.58px;">Scheduled</span></div>
<div class="c k" style="left:343px;top:899.5px;height:45.5px;"><div><span style="letter-spacing:0.02px;">Final assembly</span></div></div>
<div class="c k" style="left:516px;top:899.5px;height:45.5px;"><span style="letter-spacing:-0.26px;">10 pcs</span></div>
<div class="c k" style="left:605px;top:899.5px;height:45.5px;"><span style="letter-spacing:0.50px;">FA</span></div>
<div class="c k" style="left:686px;top:899.5px;height:45.5px;"><span style="letter-spacing:0.30px;">Received</span></div>
<div class="c k" style="left:821px;top:899.5px;height:45.5px;"><span style="letter-spacing:0.7px">02<span style="margin:0 2px">/</span><span style="margin:0 -1.5px">1</span>9<span style="margin:0 2px">/</span></span></div>
<div class="c k" style="left:983px;top:899.5px;height:45.5px;"><span style="letter-spacing:0.7px">02<span style="margin:0 2px">/</span>27<span style="margin:0 2px">/</span></span></div>
<div class="c k" style="left:1152px;top:899.5px;height:45.5px;"><span style="letter-spacing:0.7px">03<span style="margin:0 2px">/</span>0<span style="margin:0 -1.5px">1</span><span style="margin:0 2px">/</span></span></div>
<div class="c k" style="left:1484px;top:899.5px;height:45.5px;"><span style="letter-spacing:-0.19px;">Mr. Peasy</span></div>
<div class="c k" style="left:1577px;top:899.5px;height:45.5px;">USD</div>
<div class="row" style="top:945px;height:44.0px"></div>
<div class="bl" style="top:988.5px"></div>
<div class="c k" style="left:35px;top:945px;height:44.0px;width:18px;justify-content:center"><span style="position:relative;display:inline-block;line-height:22px;letter-spacing:-2.5px;">11<span style="position:absolute;left:50%;margin-left:-5.5px;width:11px;top:21.6px;height:1.3px;background:#cfd5df"></span></span></div>
<div class="c k" style="left:80px;top:945px;height:44.0px;"><span class="u"><span style="letter-spacing:1.30px;">MO00209</span></span></div>
<div class="c k" style="left:208px;top:945px;height:44.0px;"><span style="letter-spacing:1.00px;">Done</span></div>
<div class="c k" style="left:343px;top:945px;height:44.0px;"><div><span style="letter-spacing:0.52px;">Wooden Table</span></div></div>
<div class="c k" style="left:516px;top:945px;height:44.0px;"><span style="letter-spacing:0.87px;">200 pcs</span></div>
<div class="c k" style="left:605px;top:945px;height:44.0px;"><span style="letter-spacing:1.30px;">WT</span></div>
<div class="c k" style="left:686px;top:945px;height:44.0px;"><span style="letter-spacing:0.30px;">Received</span></div>
<div class="c k" style="left:821px;top:945px;height:44.0px;"><span style="letter-spacing:0.7px">02<span style="margin:0 2px">/</span><span style="margin:0 -1.5px">1</span>9<span style="margin:0 2px">/</span></span></div>
<div class="c k" style="left:983px;top:945px;height:44.0px;"><span style="letter-spacing:0.7px">02<span style="margin:0 2px">/</span><span style="margin:0 -1.5px">1</span>3<span style="margin:0 2px">/</span></span></div>
<div class="c k" style="left:1152px;top:945px;height:44.0px;"><span style="letter-spacing:0.7px">02<span style="margin:0 2px">/</span><span style="margin:0 -1.5px">1</span>9<span style="margin:0 2px">/</span></span></div>
<div class="c k" style="left:1484px;top:945px;height:44.0px;"><span style="letter-spacing:-0.19px;">Mr. Peasy</span></div>
<div class="c k" style="left:1577px;top:945px;height:44.0px;">USD</div>
<div id="sb"></div><div id="thumb"></div>
<svg style="position:absolute;left:6px;top:986px" width="5" height="9" viewBox="0 0 5 9"><path d="M4.8 0 L0.5 4.4 L4.8 8.8Z" fill="#a3a3a3"/></svg>
</div></body></html>
